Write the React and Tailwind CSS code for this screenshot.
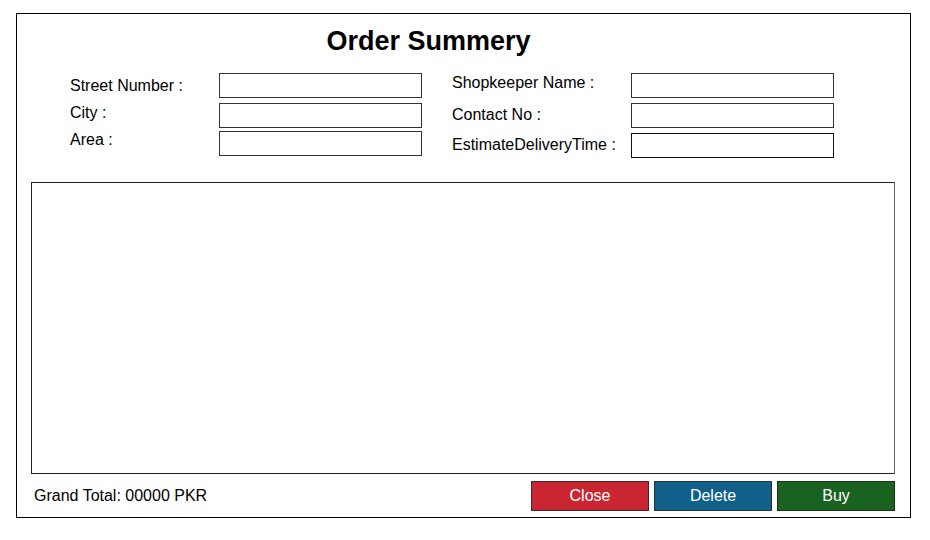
export default function App() {
  return (
    <div className="min-h-[540px] w-[930px] bg-white pt-[13px] pl-[16px] text-black" style={{ fontFamily: '"Liberation Sans", Arial, sans-serif' }}>
      <div className="w-[895px] h-[505px] border border-black">
        <h1 className="mt-[12px] w-[823px] text-center text-[27px] leading-[30px] font-bold">Order Summery</h1>

        <div className="mt-[16px] flex pl-[53px] text-[16px]">
          <div className="w-[149px] flex flex-col leading-[27px]">
            <span>Street Number :</span>
            <span>City :</span>
            <span>Area :</span>
          </div>
          <div className="w-[203px] flex flex-col pt-[1px]">
            <input className="h-[25px] w-full border border-[#333] outline-none" />
            <input className="mt-[5px] h-[25px] w-full border border-[#333] outline-none" />
            <input className="mt-[3px] h-[25px] w-full border border-[#333] outline-none" />
          </div>
          <div className="ml-[30px] w-[179px] flex flex-col pt-[1px]">
            <span className="h-[20px] leading-[20px]">Shopkeeper Name :</span>
            <span className="mt-[12px] h-[20px] leading-[20px]">Contact No :</span>
            <span className="mt-[10px] h-[20px] leading-[20px]">EstimateDeliveryTime :</span>
          </div>
          <div className="w-[203px] flex flex-col pt-[1px]">
            <input className="h-[25px] w-full border border-[#333] outline-none" />
            <input className="mt-[5px] h-[25px] w-full border border-[#333] outline-none" />
            <input className="mt-[5px] h-[25px] w-full border border-[#111] outline-none" />
          </div>
        </div>

        <div className="mt-[24px] ml-[14px] h-[292px] w-[864px] border border-[#222] border-r-[#666]"></div>

        <div className="mt-[7px] ml-[14px] w-[864px] flex items-center justify-between text-[16px]">
          <span className="pl-[3px]">Grand Total: 00000 PKR</span>
          <div className="flex gap-[5px]">
            <button className="h-[30px] w-[118px] border border-[#3a2a2a] bg-[#c92632] text-white">Close</button>
            <button className="h-[30px] w-[118px] border border-[#1f3340] bg-[#10608a] text-white">Delete</button>
            <button className="h-[30px] w-[118px] border border-[#1e2e1e] bg-[#1a621f] text-white">Buy</button>
          </div>
        </div>
      </div>
    </div>
  );
}
